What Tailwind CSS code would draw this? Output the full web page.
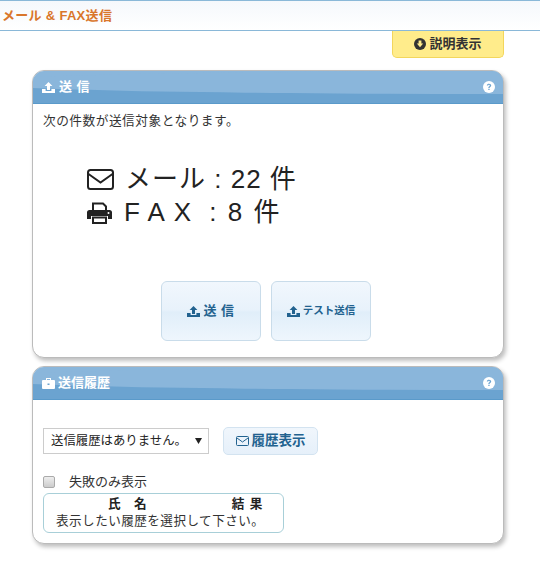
<!DOCTYPE html>
<html lang="ja">

<head>
  <meta charset="UTF-8" />
  <title>メール & FAX送信</title>
  <script src="https://cdn.jsdelivr.net/npm/@tailwindcss/browser@4"></script>
</head>

<body class="bg-white w-[540px] h-[568px] overflow-hidden text-[#333] font-['Liberation_Sans','Noto_Sans_CJK_JP',sans-serif]">
  <!-- タイトル -->
  <header class="h-[31px] border-y border-[#8ab8d8] bg-gradient-to-b from-[#f5f8fc] to-white flex items-center pl-[2px]">
    <h1 class="text-[13px] font-bold text-[#d9762b] tracking-[0.3px]">メール &amp; FAX送信</h1>
  </header>

  <!-- 説明表示 -->
  <div class="flex justify-end pr-[36px]">
    <button class="w-[112px] h-[27px] flex items-center justify-center gap-[3px] bg-[#ffec8b] border border-t-0 border-[#f3d65c] rounded-b-[5px] text-[13px] font-bold text-[#333]">
      <svg width="12" height="12" viewBox="0 0 12 12"><circle cx="6" cy="6" r="6" fill="#333"/><path d="M4.600 2.600h2.800v3h1.800L6 9.200 2.800 5.600h1.800z" fill="#ffec8b"/></svg>
      説明表示
    </button>
  </div>

  <!-- 送信 -->
  <section class="mt-[12px] ml-[32px] w-[472px] h-[288px] bg-white border border-[#bbb] rounded-[12px] shadow-[2px_3px_4px_rgba(0,0,0,0.25)] overflow-hidden">
    <div class="relative h-[34px] -mt-px -mx-px bg-[linear-gradient(#8ab6db_11px,#6ba3d0_11px)] border-y border-[#5a9aca] flex items-center pl-[10px] pr-[9px] overflow-hidden">
      <div class="absolute left-[-60px] right-[-500px] top-0 h-[23px] bg-[#8ab6db] rounded-[50%]"></div>
      <div class="relative flex items-center gap-[4px] text-[13px] font-bold text-white">
        <svg width="13" height="12" viewBox="0 0 13 12"><path d="M5 9V5H2.600L6.500 1l3.900 4H8v4z M0 8h3.600v2h5.800V8H13v4H0z" fill="#fff"/></svg>
        <span class="tracking-[0.5px]">送 信</span>
      </div>
      <svg class="relative ml-auto" width="12" height="12" viewBox="0 0 12 12"><circle cx="6" cy="6" r="6" fill="#fff"/><path d="M3.800 4.600C3.900 3.300 4.800 2.700 6 2.700s2.200.7 2.200 1.800c0 1.500-1.700 1.400-1.700 2.600H5.300c0-1.800 1.500-1.700 1.500-2.600 0-.4-.3-.7-.8-.7s-.8.3-.9.8z M5.300 7.800h1.300v1.300H5.300z" fill="#6ba3d0"/></svg>
    </div>
    <p class="mt-[8px] ml-[10px] text-[12.700px] leading-[18px] tracking-[0.5px]">次の件数が送信対象となります。</p>

    <div class="mt-[33px] ml-[54px] flex flex-col text-[26px] leading-[33px] text-[#222] tracking-[0.5px]">
      <div class="flex items-center gap-[11px]">
        <svg width="27" height="21" viewBox="0 0 27 21" fill="none" stroke="#222" stroke-width="2"><rect x="1" y="1" width="25" height="19" rx="2.500"/><path d="M1.500 5l12 8.500 12-8.500"/></svg>
        <span class="tracking-[1px]">メール : 22 件</span>
      </div>
      <div class="flex items-center gap-[12px]">
        <svg width="25" height="22" viewBox="0 0 25 22"><path d="M6 9V1.500h10l3 3V9" fill="none" stroke="#222" stroke-width="2"/><path d="M2.500 8h20A2.500 2.500 0 0 1 25 10.500V17h-4v-3H4v3H0v-6.500A2.500 2.500 0 0 1 2.500 8z" fill="#222"/><path d="M6 15.500h13V21H6z" fill="none" stroke="#222" stroke-width="2"/><circle cx="21.500" cy="11" r="1" fill="#fff"/></svg>
        <span class="tracking-[9px]">FAX<span class="tracking-[2px]">&nbsp;: 8 件</span></span>
      </div>
    </div>

    <div class="mt-[52px] ml-[128px] flex gap-[10px]">
      <button class="w-[100px] h-[60px] rounded-[6px] border border-[#c9dcea] bg-[linear-gradient(#f1f7fd,#e8f2fb_48%,#e0eef9_52%,#eef6fd)] flex items-center justify-center gap-[3px] text-[13px] font-bold text-[#22628f] tracking-[0.5px]">
        <svg width="13" height="12" viewBox="0 0 13 12"><path d="M5 9V5H2.600L6.500 1l3.900 4H8v4z M0 8h3.600v2h5.800V8H13v4H0z" fill="#22628f"/></svg>
        送 信
      </button>
      <button class="w-[100px] h-[60px] rounded-[6px] border border-[#c9dcea] bg-[linear-gradient(#f1f7fd,#e8f2fb_48%,#e0eef9_52%,#eef6fd)] flex items-center justify-center gap-[3px] text-[10.500px] font-bold text-[#22628f]">
        <svg width="13" height="12" viewBox="0 0 13 12"><path d="M5 9V5H2.600L6.500 1l3.900 4H8v4z M0 8h3.600v2h5.800V8H13v4H0z" fill="#22628f"/></svg>
        テスト送信
      </button>
    </div>
  </section>

  <!-- 送信履歴 -->
  <section class="mt-[8px] ml-[32px] w-[472px] h-[178px] bg-white border border-[#bbb] rounded-[12px] shadow-[2px_3px_4px_rgba(0,0,0,0.25)] overflow-hidden">
    <div class="relative h-[34px] -mt-px -mx-px bg-[linear-gradient(#8ab6db_11px,#6ba3d0_11px)] border-y border-[#5a9aca] flex items-center pl-[10px] pr-[9px] overflow-hidden">
      <div class="absolute left-[-60px] right-[-500px] top-0 h-[23px] bg-[#8ab6db] rounded-[50%]"></div>
      <div class="relative flex items-center gap-[3px] text-[13px] font-bold text-white">
        <svg width="13" height="12" viewBox="0 0 13 12"><path d="M4 3V1h5v2h3a1 1 0 0 1 1 1v7a1 1 0 0 1-1 1H1a1 1 0 0 1-1-1V4a1 1 0 0 1 1-1z M5 3h3V2H5z" fill="#fff" fill-rule="evenodd"/><path d="M5.500 6.500h2V8h-2z" fill="#6ba3d0"/></svg>
        <span>送信履歴</span>
      </div>
      <svg class="relative ml-auto" width="12" height="12" viewBox="0 0 12 12"><circle cx="6" cy="6" r="6" fill="#fff"/><path d="M3.800 4.600C3.900 3.300 4.800 2.700 6 2.700s2.200.7 2.200 1.800c0 1.500-1.700 1.400-1.700 2.600H5.300c0-1.800 1.500-1.700 1.500-2.600 0-.4-.3-.7-.8-.7s-.8.3-.9.8z M5.300 7.800h1.300v1.300H5.300z" fill="#6ba3d0"/></svg>
    </div>

    <div class="mt-[27px] ml-[10px] flex items-center gap-[14px]">
      <div class="w-[166px] h-[26px] border border-[#ccc] bg-white flex items-center pl-[7px] pr-[6px] text-[12.400px] text-[#222]">
        <span>送信履歴はありません。</span>
        <svg class="ml-auto" width="7" height="6" viewBox="0 0 7 6"><path d="M0 0h7L3.500 6z" fill="#222"/></svg>
      </div>
      <button class="w-[95px] h-[28px] rounded-[5px] border border-[#d3e3f0] bg-gradient-to-b from-[#f0f6fc] to-[#e6f0fa] flex items-center justify-center gap-[3px] text-[13.500px] font-bold text-[#22628f]">
        <svg width="13" height="10" viewBox="0 0 13 10" fill="none" stroke="#22628f"><rect x=".5" y=".5" width="12" height="9" rx="1"/><path d="M1 2l5.500 4L12 2"/></svg>
        履歴表示
      </button>
    </div>

    <label class="mt-[20px] ml-[10px] flex items-center text-[13px] leading-[14px] text-[#333]">
      <span class="w-[12px] h-[12px] rounded-[2px] border border-[#aaa] bg-gradient-to-b from-[#eee] to-[#ccc]"></span>
      <span class="ml-[14px]">失敗のみ表示</span>
    </label>

    <div class="mt-[4px] ml-[10px] w-[241px] h-[40px] border border-[#a8cfd8] rounded-[6px] pt-[1px] text-[12.600px] leading-[18px]">
      <div class="flex font-bold text-[#222]">
        <span class="ml-[64px] tracking-[5px]">氏 名</span>
        <span class="ml-[80px] tracking-[1px]">結 果</span>
      </div>
      <p class="ml-[12px] leading-[17px] tracking-[0.45px]">表示したい履歴を選択して下さい。</p>
    </div>
  </section>
</body>

</html>
